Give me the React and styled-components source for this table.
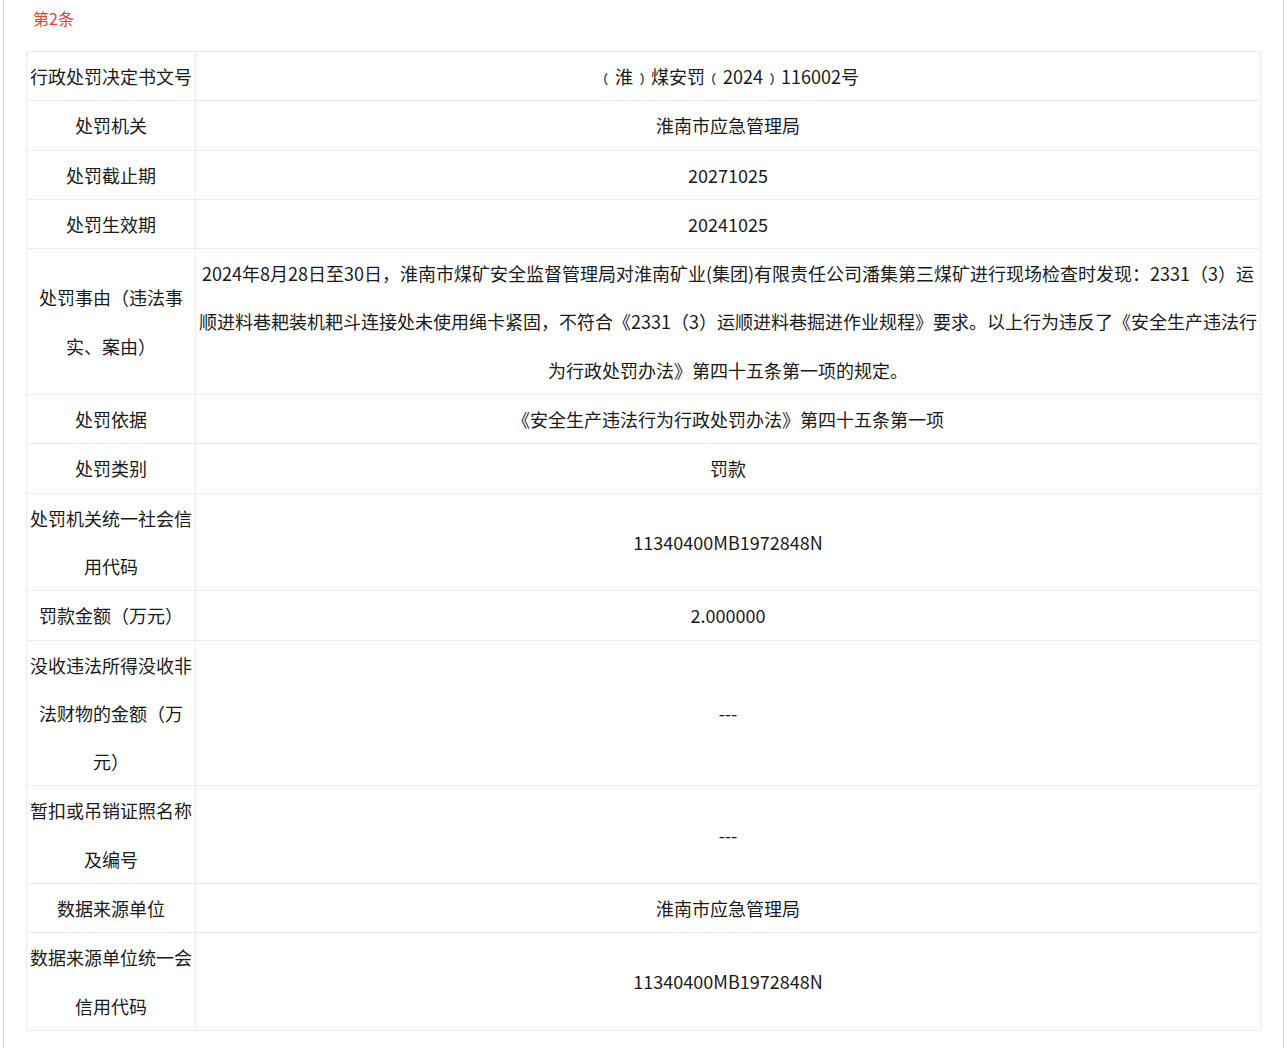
import React from 'react'
import styled, { createGlobalStyle } from 'styled-components'

const GlobalStyle = createGlobalStyle`
  body {
    margin: 0;
    background: #ffffff;
    font-family: "Noto Sans CJK SC", "Noto Sans", sans-serif;
    color: #1a1a1a;
  }
`

const Panel = styled.div`
  margin: 0 3px;
  padding: 0 22px 16px;
  border-left: 1px solid #dcdcdc;
  border-right: 1px solid #dcdcdc;
  min-height: 1048px;
  box-sizing: border-box;
`

const Title = styled.div`
  height: 36px;
  line-height: 36px;
  padding-left: 7px;
  font-size: 16px;
  color: #f23a3a;
`

const Table = styled.table`
  width: 100%;
  margin-top: 15px;
  border-collapse: collapse;
  border: 1px solid #ececec;
  table-layout: fixed;
`

const Cell = styled.td`
  border: 1px solid #ececec;
  padding: 0 ${props => (props.label ? '3px' : '2px')};
  font-size: 18px;
  line-height: 48.3px;
  text-align: center;
  vertical-align: middle;
  word-break: break-all;
  width: ${props => (props.label ? '162px' : 'auto')};
`

const rows = [
  ['行政处罚决定书文号', '﹙淮﹚煤安罚﹙2024﹚116002号'],
  ['处罚机关', '淮南市应急管理局'],
  ['处罚截止期', '20271025'],
  ['处罚生效期', '20241025'],
  [
    '处罚事由（违法事实、案由）',
    '2024年8月28日至30日，淮南市煤矿安全监督管理局对淮南矿业(集团)有限责任公司潘集第三煤矿进行现场检查时发现：2331（3）运顺进料巷耙装机耙斗连接处未使用绳卡紧固，不符合《2331（3）运顺进料巷掘进作业规程》要求。以上行为违反了《安全生产违法行为行政处罚办法》第四十五条第一项的规定。',
  ],
  ['处罚依据', '《安全生产违法行为行政处罚办法》第四十五条第一项'],
  ['处罚类别', '罚款'],
  ['处罚机关统一社会信用代码', '11340400MB1972848N'],
  ['罚款金额（万元）', '2.000000'],
  ['没收违法所得没收非法财物的金额（万元）', '---'],
  ['暂扣或吊销证照名称及编号', '---'],
  ['数据来源单位', '淮南市应急管理局'],
  ['数据来源单位统一会信用代码', '11340400MB1972848N'],
]

export default function App() {
  return (
    <>
      <GlobalStyle />
      <Panel>
        <Title>第2条</Title>
        <Table>
          <tbody>
            {rows.map(([k, v]) => (
              <tr key={k}>
                <Cell label>{k}</Cell>
                <Cell>{v}</Cell>
              </tr>
            ))}
          </tbody>
        </Table>
      </Panel>
    </>
  )
}
